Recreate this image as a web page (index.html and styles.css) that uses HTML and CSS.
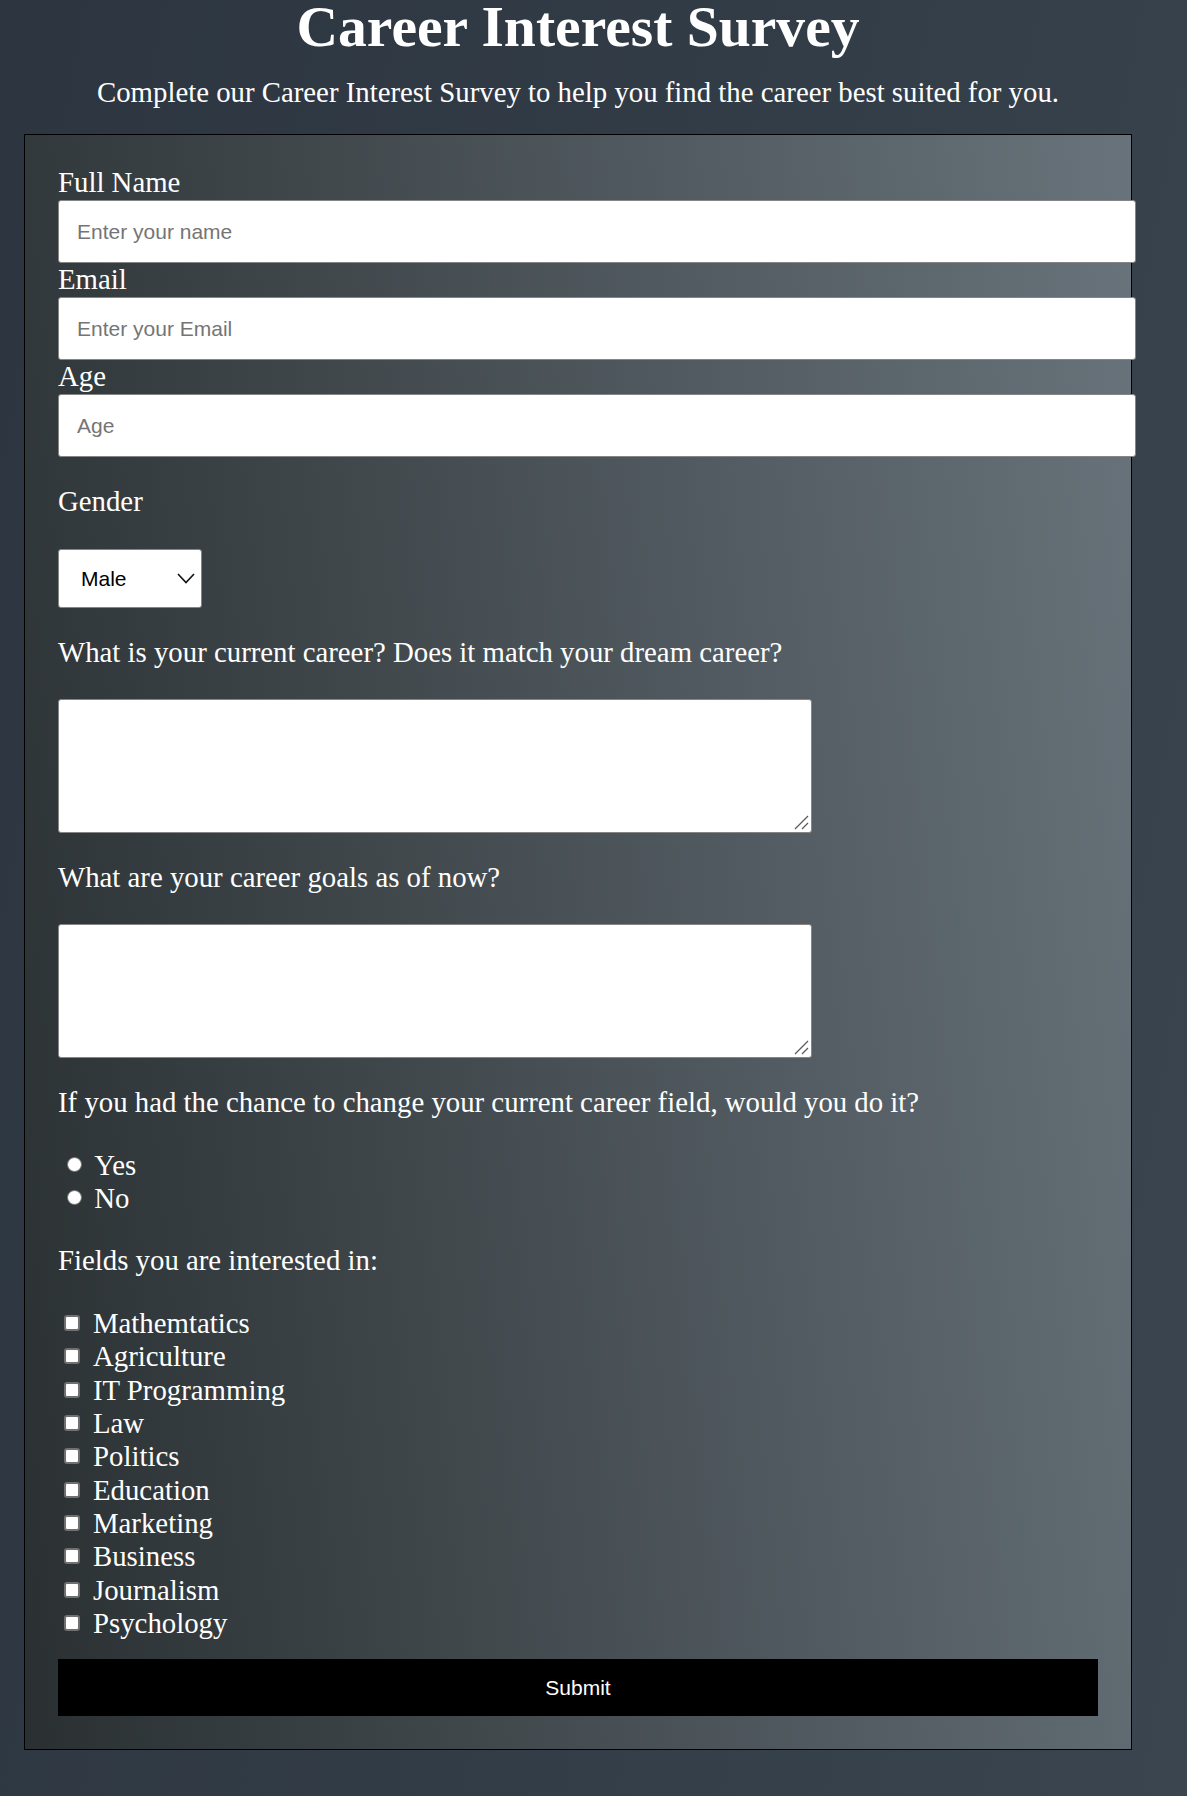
FILE: index.html
```html
<!DOCTYPE html>
<html lang="en">
<head>
<meta charset="utf-8">
<title>Career Interest Survey</title>
<link rel="stylesheet" href="styles.css">
</head>
<body>
<div class="page">
  <h1 class="title">Career Interest Survey</h1>
  <p class="subtitle">Complete our Career Interest Survey to help you find the career best suited for you.</p>
  <form class="survey">
    <label class="field-label" for="name">Full Name</label>
    <input class="text-input" id="name" type="text" placeholder="Enter your name">
    <label class="field-label" for="email">Email</label>
    <input class="text-input" id="email" type="email" placeholder="Enter your Email">
    <label class="field-label" for="age">Age</label>
    <input class="text-input" id="age" type="number" placeholder="Age">

    <p class="question">Gender</p>
    <div class="select-wrap">
      <select class="select"><option>Male</option><option>Female</option><option>Other</option></select>
      <svg class="chevron" viewBox="0 0 18 11" width="18" height="11"><polyline points="1,1 9,9.5 17,1" fill="none" stroke="#111" stroke-width="1.6"/></svg>
    </div>

    <p class="question">What is your current career? Does it match your dream career?</p>
    <div class="area-wrap">
      <textarea class="textarea"></textarea>
      <svg class="grip" viewBox="0 0 15 15" width="15" height="15"><line x1="1" y1="14" x2="14" y2="1" stroke="#5a5a5a" stroke-width="1.3"/><line x1="8" y1="14" x2="14" y2="8" stroke="#5a5a5a" stroke-width="1.3"/></svg>
    </div>

    <p class="question">What are your career goals as of now?</p>
    <div class="area-wrap">
      <textarea class="textarea"></textarea>
      <svg class="grip" viewBox="0 0 15 15" width="15" height="15"><line x1="1" y1="14" x2="14" y2="1" stroke="#5a5a5a" stroke-width="1.3"/><line x1="8" y1="14" x2="14" y2="8" stroke="#5a5a5a" stroke-width="1.3"/></svg>
    </div>

    <p class="question">If you had the chance to change your current career field, would you do it?</p>
    <div class="options">
      <label class="option"><input class="radio" type="radio" name="change">Yes</label>
      <label class="option"><input class="radio" type="radio" name="change">No</label>
    </div>

    <p class="question">Fields you are interested in:</p>
    <div class="options">
      <label class="option"><input class="check" type="checkbox">Mathemtatics</label>
      <label class="option"><input class="check" type="checkbox">Agriculture</label>
      <label class="option"><input class="check" type="checkbox">IT Programming</label>
      <label class="option"><input class="check" type="checkbox">Law</label>
      <label class="option"><input class="check" type="checkbox">Politics</label>
      <label class="option"><input class="check" type="checkbox">Education</label>
      <label class="option"><input class="check" type="checkbox">Marketing</label>
      <label class="option"><input class="check" type="checkbox">Business</label>
      <label class="option"><input class="check" type="checkbox">Journalism</label>
      <label class="option"><input class="check" type="checkbox">Psychology</label>
    </div>

    <button class="submit" type="submit">Submit</button>
  </form>
</div>
</body>
</html>
```
FILE: styles.css
```css
html {
  min-height: 100%;
  background: linear-gradient(100deg, #2c3540 0%, #323c47 50%, #3b4550 100%);
}

body {
  margin: 0;
  min-height: 1796px;
  font-family: "Liberation Serif", "Times New Roman", serif;
  font-size: 28.8px;
  color: #ffffff;
}

.page {
  width: 1156px;
  padding-bottom: 46px;
}

.title {
  margin: 1px 0 0;
  font-size: 57.6px;
  line-height: 52px;
  font-weight: bold;
  text-align: center;
}

.subtitle {
  margin: 23px 0 0;
  line-height: 33px;
  text-align: center;
}

.survey {
  width: 1040px;
  margin: 25px auto 0;
  padding: 31px 33px 33px;
  border: 1px solid #000;
  background: linear-gradient(84deg, #2a3032 0%, #68737b 100%);
}

.field-label {
  display: block;
  line-height: 33px;
}

.text-input {
  display: block;
  width: 100%;
  height: 61px;
  margin: 1px 0 0;
  padding: 0 18px;
  border: 1px solid #858585;
  border-radius: 3px;
  background: #fff;
  font-family: "Liberation Sans", Arial, sans-serif;
  font-size: 21px;
  color: #000;
}

.text-input::placeholder {
  color: #757575;
}

.question {
  margin: 28px 0 30.5px;
  line-height: 33px;
}

.select-wrap {
  position: relative;
  width: 144px;
}

.select {
  display: block;
  width: 144px;
  height: 59px;
  padding: 0 0 0 22px;
  border: 1px solid #858585;
  border-radius: 3px;
  background: #fff;
  font-family: "Liberation Sans", Arial, sans-serif;
  font-size: 21px;
  color: #000;
  appearance: none;
  -webkit-appearance: none;
}

.chevron {
  position: absolute;
  left: 119px;
  top: 24px;
  pointer-events: none;
}

.area-wrap {
  position: relative;
  width: 754px;
}

.textarea {
  display: block;
  box-sizing: border-box;
  width: 754px;
  height: 133.5px;
  border: 1px solid #858585;
  border-radius: 3px;
  background: #fff;
  resize: none;
}

.grip {
  position: absolute;
  right: 3px;
  bottom: 3px;
  pointer-events: none;
}

.options {
  margin: 0;
}

.option {
  display: block;
  line-height: 33.33px;
}

.radio {
  appearance: none;
  -webkit-appearance: none;
  box-sizing: border-box;
  width: 15px;
  height: 15px;
  margin: 0 12.6px 0 8.7px;
  border: 1.5px solid #6d6d6d;
  border-radius: 50%;
  background: #fff;
  vertical-align: 3px;
}

.check {
  appearance: none;
  -webkit-appearance: none;
  box-sizing: border-box;
  width: 16px;
  height: 16px;
  margin: 0 12.7px 0 6.3px;
  border: 2px solid #707070;
  border-radius: 3px;
  background: #fff;
  vertical-align: 2px;
}

.submit {
  display: block;
  width: 100%;
  height: 57px;
  margin-top: 19px;
  border: none;
  background: #000;
  color: #fff;
  font-family: "Liberation Sans", Arial, sans-serif;
  font-size: 21px;
}
```
